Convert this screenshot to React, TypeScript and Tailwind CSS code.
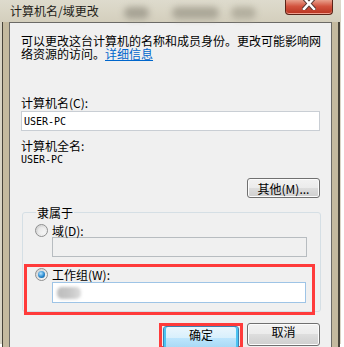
import React from "react";

const Radio = ({ checked }: { checked?: boolean }) => (
  <div className="w-[13px] h-[13px] shrink-0 rounded-full border border-[#8e8f8f] bg-gradient-to-br from-[#cfcfcf] to-[#fbfbfb] flex items-center justify-center">
    {checked ? (
      <div className="w-[7px] h-[7px] rounded-full bg-[radial-gradient(circle_at_40%_35%,#b8e6ff,#2a8ad0_55%,#0d4a7e)]" />
    ) : (
      <div className="w-[7px] h-[7px] rounded-full bg-gradient-to-br from-[#e4e4e4] to-[#f8f8f8]" />
    )}
  </div>
);

const WinButton = ({ label, primary, top }: { label: string; primary?: boolean; top?: boolean }) => (
  <button
    type="button"
    className={
      (primary
        ? "w-[76px] border-[#3c7fb1] bg-[linear-gradient(#eaf6fd,#d9f0fc_50%,#bee6fd_50%,#a7d9f5)] shadow-[inset_2px_0_0_#4cc4f2,inset_-2px_0_0_#4cc4f2]"
        : "w-[73px] border-[#707070] bg-[linear-gradient(#f2f2f2,#ebebeb_50%,#dddddd_50%,#cfcfcf)] shadow-[inset_0_0_0_1px_#fcfcfc]") +
      (top ? " h-[23px] items-start pt-[1px]" : " h-[20px] items-center") +
      " flex justify-center rounded-[3px] border text-[12px] leading-[13px] text-black"
    }
  >
    {label}
  </button>
);

export default function App() {
  return (
    <div className="w-[344px] h-[347px] bg-white overflow-hidden font-['Noto_Sans_CJK_SC','Noto_Sans',sans-serif] text-[12px] leading-[13px] text-black">
      <div className="h-[344px] w-[341px] bg-[#d9d5c6] flex flex-col">
        {/* title bar */}
        <div className="h-[22px] shrink-0 flex items-start pl-[10px] bg-gradient-to-b from-[#dedbcd] to-[#d4cfbd]">
          <span className="mt-[4px] text-[#1f1d18] whitespace-nowrap">计算机名/域更改</span>
          <div className="ml-[25px] mt-[7px] w-[25px] h-[12px] rounded-full bg-[#a7a395] blur-[3px]" />
          <div className="ml-[23px] mt-[7px] w-[47px] h-[12px] rounded-full bg-[#aba798] blur-[3px]" />
          <div className="ml-[12px] mt-[7px] w-[25px] h-[12px] rounded-full bg-[#b3af9f] blur-[3px]" />
          <div className="ml-auto mr-[8px] w-[48px] h-[15px] rounded-b-[4px] border border-t-0 border-[#5a2418] bg-[linear-gradient(#e8a08c,#d2533e_45%,#b8321f)] shadow-[inset_0_-1px_0_#f0a090] flex items-start justify-center">
            <svg width="14" height="11" viewBox="0 0 14 11" className="-mt-[1px]">
              <path d="M2 -1 L12 10 M12 -1 L2 10" stroke="#5a3a34" strokeWidth="4.5" strokeLinecap="square" />
              <path d="M2 -1 L12 10 M12 -1 L2 10" stroke="#ffffff" strokeWidth="2.5" strokeLinecap="square" />
            </svg>
          </div>
        </div>

        {/* frame + client area */}
        <div className="flex-1 flex ml-[2px] w-[338px] border-l border-r-2 border-[#48443a] bg-[#c4ba9f] px-[6px]">
          <div className="flex-1 flex flex-col overflow-hidden bg-[#f0f0f0] border border-b-0 border-[#6b6a66] px-[11px] pt-[11px]">
            <p className="w-[301px]">
              可以更改这台计算机的名称和成员身份。更改可能影响网络资源的访问。
              <span className="text-[#0066cc] underline">详细信息</span>
            </p>

            <div className="mt-[36px]">计算机名(C):</div>
            <div className="mt-[2px] h-[20px] border border-[#c9ced4] bg-white flex items-center pl-[2px] font-['DejaVu_Sans_Mono',monospace] text-[10px]">
              USER-PC
            </div>

            <div className="mt-[8px]">计算机全名:</div>
            <div className="mt-[1px] font-['DejaVu_Sans_Mono',monospace] text-[10px]">USER-PC</div>

            <div className="mt-[12px] flex justify-end">
              <WinButton label="其他(M)..." />
            </div>

            <fieldset className="mt-[8px] ml-[1px] w-[299px] border border-[#d5dfe5] rounded-[3px] pl-[12px]">
              <legend className="ml-[1px] px-[1px]">隶属于</legend>
              <div className="mt-[5px] flex items-center gap-[4px]">
                <Radio />
                <span>域(D):</span>
              </div>
              <div className="ml-[17px] mr-[13px] h-[20px] border border-[#b7bcc0] bg-[#f0f0f0]" />

              <div className="-ml-[11px] mt-[7px] -mb-[4px] w-[291px] border-[3px] border-[#ff3b3b] pl-[8px] pr-[6px] pt-[1px] pb-[9px]">
                <div className="flex items-center gap-[4px]">
                  <Radio checked />
                  <span>工作组(W):</span>
                </div>
                <div className="ml-[17px] mt-[1px] h-[21px] border border-[#9ec4e6] bg-white flex items-center pl-[4px]">
                  <div className="w-[24px] h-[12px] rounded-[5px] bg-gradient-to-r from-[#bdbdbd] via-[#c6c6c6] to-[#dcdcdc] blur-[1.5px]" />
                </div>
              </div>
            </fieldset>

            <div className="mt-[11px] flex justify-end items-start gap-[4px]">
              <div className="border-[3px] border-[#ff3b3b] px-[1px] w-[84px] h-[26px] flex items-start">
                <WinButton label="确定" primary top />
              </div>
              <div>
                <WinButton label="取消" top />
              </div>
            </div>
          </div>
        </div>
      </div>
    </div>
  );
}
